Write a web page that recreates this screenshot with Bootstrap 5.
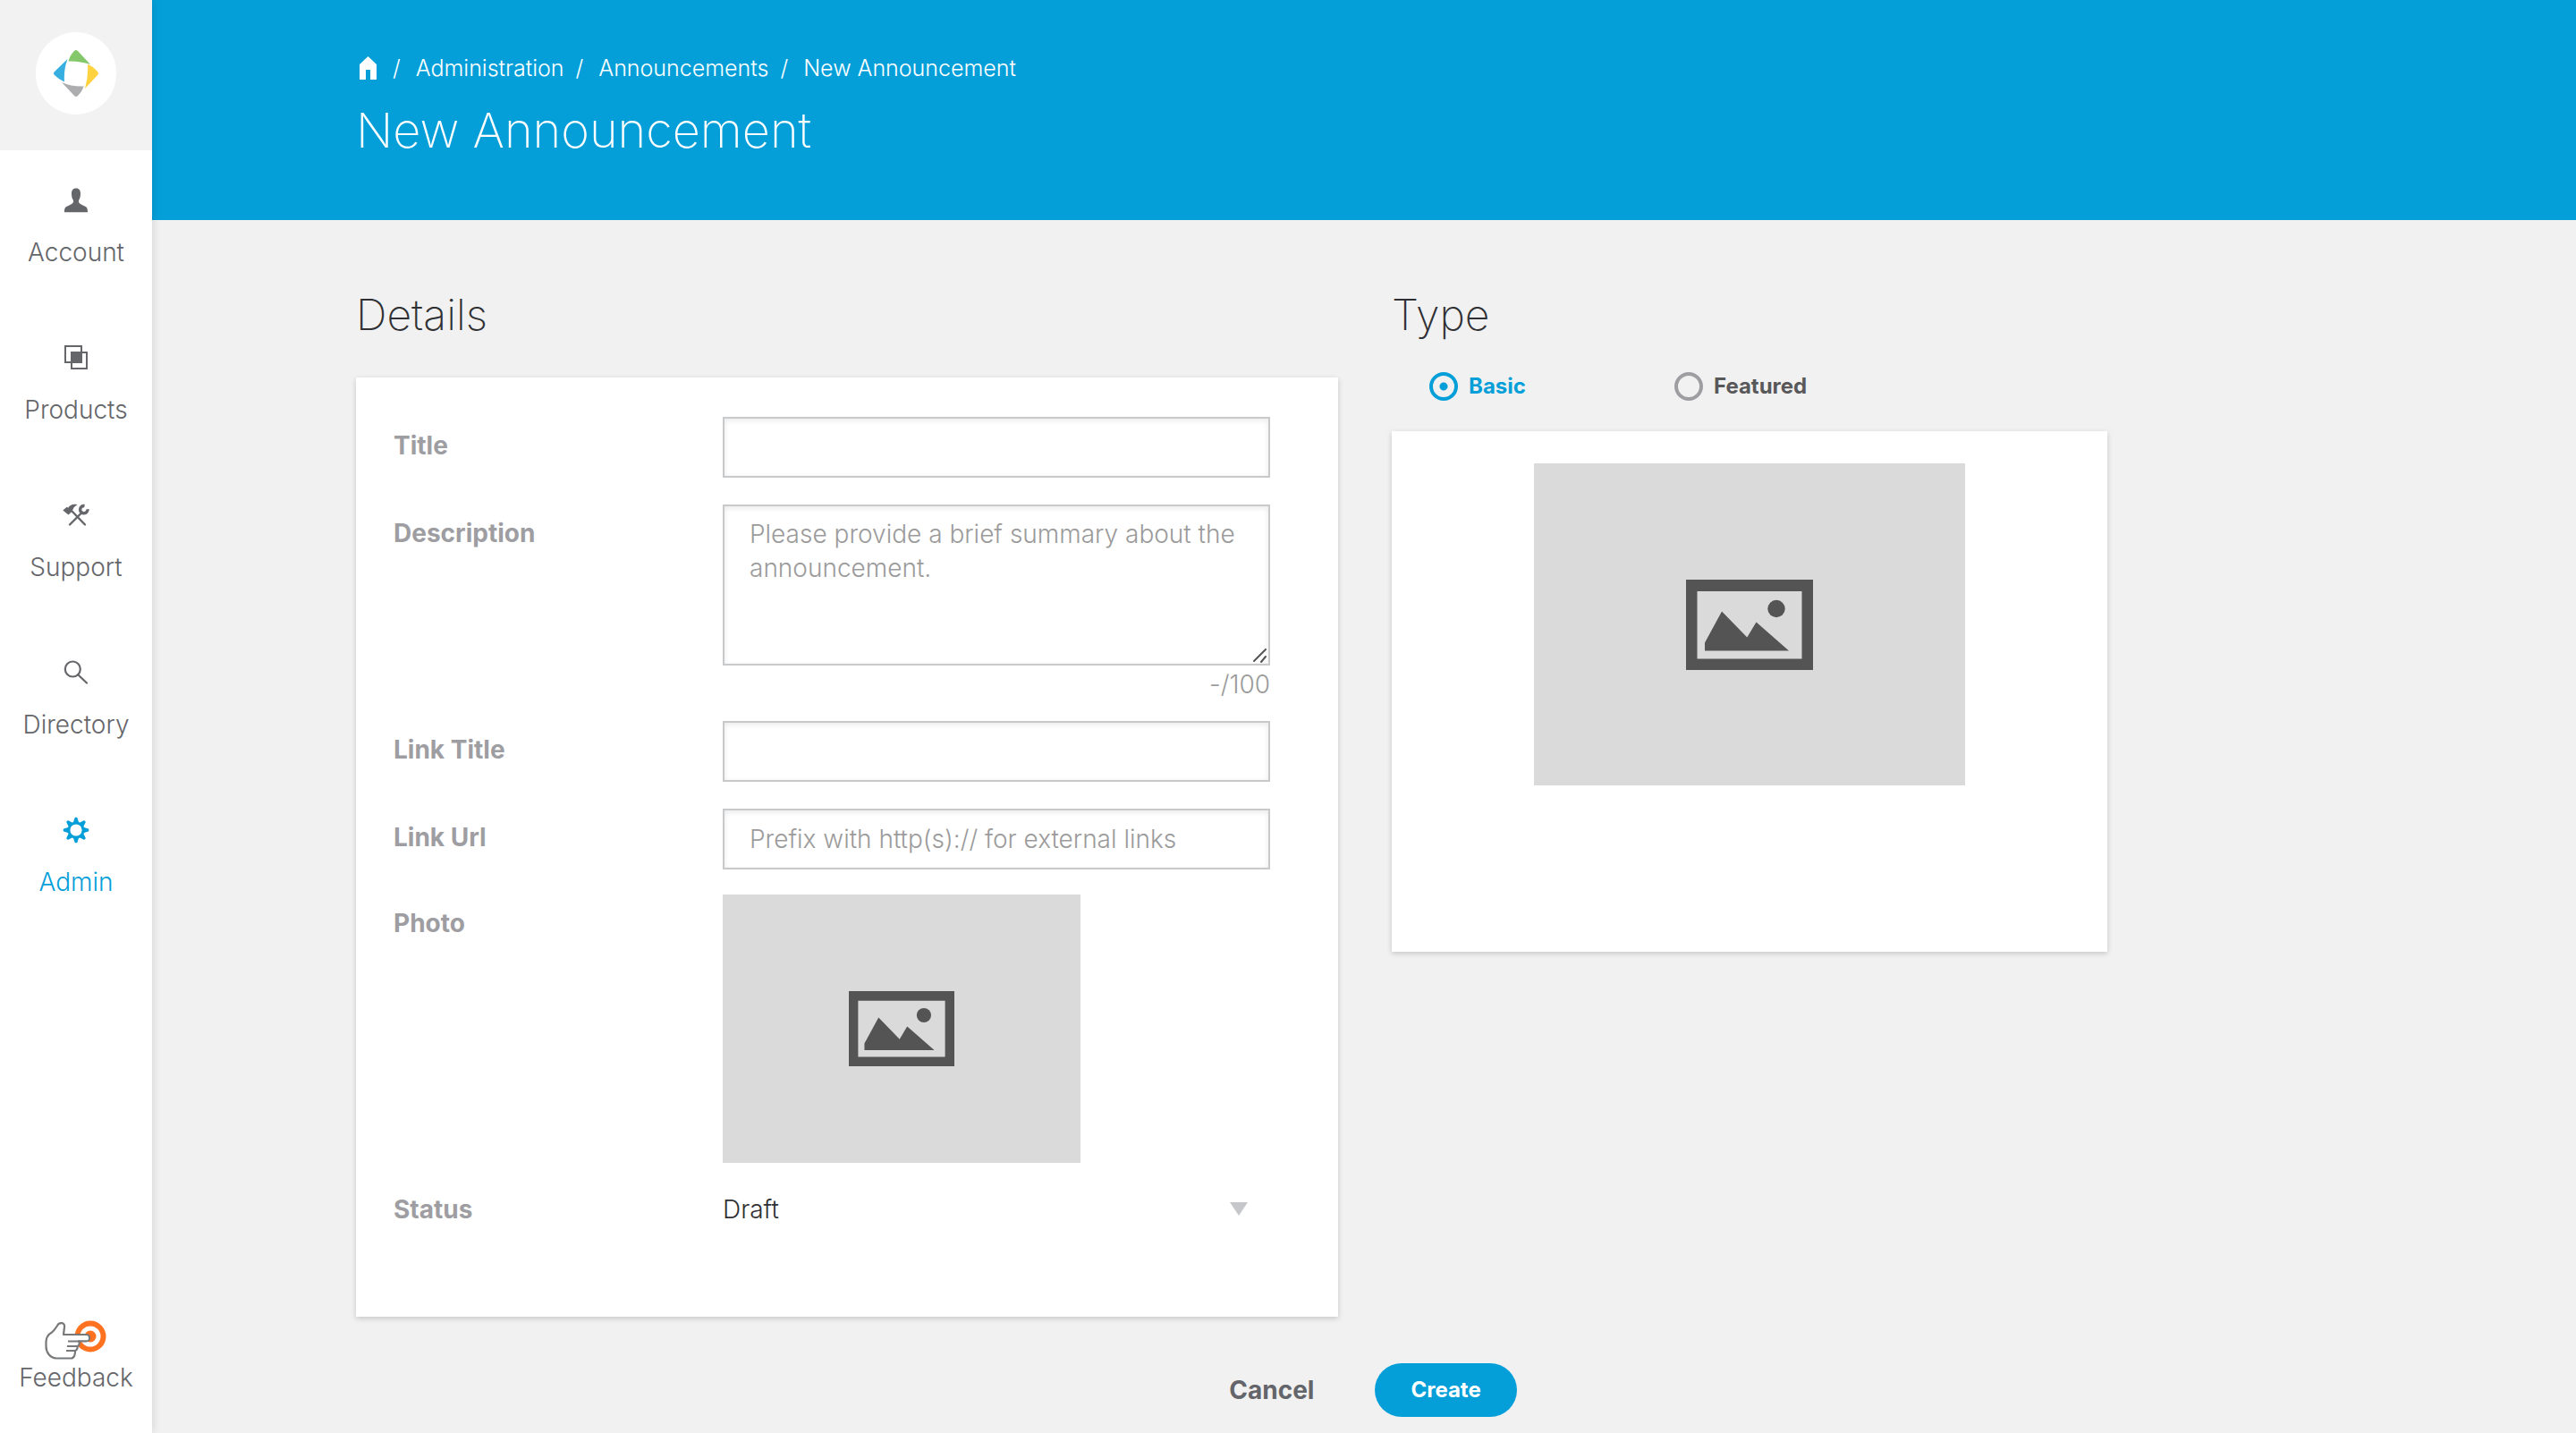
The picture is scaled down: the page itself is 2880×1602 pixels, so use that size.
<!DOCTYPE html>
<html lang="en">
<head>
<meta charset="utf-8">
<meta name="viewport" content="width=device-width, initial-scale=1">
<title>New Announcement</title>
<link href="https://cdn.jsdelivr.net/npm/bootstrap@5.3.0/dist/css/bootstrap.min.css" rel="stylesheet">
<style>
  body { font-family: Inter, "Liberation Sans", sans-serif; font-size: 28px; font-weight: 300; line-height: 40px; color: #2f3033; background: #f1f1f1; }
  .side-bar { width: 170px; z-index: 2; box-shadow: 0 0 10px rgba(0,0,0,.14); }
  .brand-area { height: 168px; background: #f2f2f2; }
  .brand-disc { width: 90px; height: 92px; border-radius: 45px; }
  .side-link { height: 176px; padding-top: 40px; gap: 22px; color: #65666a; }
  .side-link svg { width: 32px; height: 32px; }
  .side-link.active { color: #049fd9; }
  .feedback-link { color: #65666a; padding-bottom: 42px; }
  .page-head { background: #049fd9; padding: 57px 228px 68px; }
  .crumbs { --bs-breadcrumb-divider-color: #fff; --bs-breadcrumb-item-padding-x: 13px; font-size: 25px; line-height: 38px; margin-bottom: 19px; }
  .crumbs .breadcrumb-item + .breadcrumb-item::before { padding-right: 17px; }
  .page-title { font-size: 54px; line-height: 64px; font-weight: 200; }
  .page-body { padding: 76px 0 18px; }
  .form-cols { margin-left: 228px; max-width: 1958px; gap: 60px; }
  .details-col { flex: 1098 1 0; }
  .type-col { flex: 800 1 0; }
  .section-title { font-size: 48px; line-height: 60px; font-weight: 200; }
  .panel { background: #fff; box-shadow: 0 2px 6px rgba(0,0,0,.18); }
  .details-panel { margin-top: 40px; padding: 44px 76px 88px 42px; }
  .form-line { margin-bottom: 30px; }
  .form-line > label, .form-line > .line-label { width: 368px; flex: none; padding-top: 12px; font-weight: 700; color: #9e9ea2; }
  .field { border: 2px solid #c8c9ca; border-radius: 0; padding: 12px 28px; font-size: 28px; line-height: 40px; font-weight: 300; box-shadow: inset 0 2px 6px rgba(0,0,0,.09); }
  .field::placeholder { color: #9b9b9b; opacity: 1; }
  .field-box { height: 68px; }
  .field-area { height: 180px; resize: none; line-height: 38px; }
  .grip { right: 3px; bottom: 3px; width: 16px; height: 16px; }
  .counter { color: #9b9b9b; line-height: 38px; padding-top: 2px; margin-bottom: -2px; }
  .url-line { margin-bottom: 28px; }
  .photo-line { margin-bottom: 20px; }
  .photo-box { background: #dadada; color: #545454; }
  .photo-small { width: 400px; height: 300px; }
  .photo-large { width: 482px; height: 360px; }
  .status-select { border: 0; padding: 0; height: 64px; background: none; font-size: 28px; font-weight: 300; line-height: 40px; color: #2f3033; }
  .select-arrow { right: 25px; top: 24px; }
  .radio-row { margin: 34px 0; padding-left: 42px; }
  .radio-item { width: 274px; gap: 12px; font-size: 24px; line-height: 32px; font-weight: 700; color: #58585b; }
  .radio-item .form-check-input { width: 32px; height: 32px; margin: 0; border: 4px solid #9e9ea2; background: none; }
  .radio-item .form-check-input:checked { border-color: #049fd9; background: radial-gradient(circle, #049fd9 4px, transparent 5px); }
  .radio-item .form-check-input:checked + label { color: #049fd9; }
  .type-panel { padding: 36px 36px 186px; }
  .actions { margin-top: 52px; gap: 48px; }
  .cancel-btn { padding: 10px 20px; font-size: 28px; line-height: 40px; font-weight: 700; color: #64656a; border: 0; }
  .create-btn { padding: 10px 40px; font-size: 24px; line-height: 40px; font-weight: 700; color: #fff; background: #049fd9; border: 0; }
</style>
<script defer src="https://cdn.jsdelivr.net/npm/bootstrap@5.3.0/dist/js/bootstrap.bundle.min.js"></script>
</head>
<body>
<svg class="d-none">
  <symbol id="picture" viewBox="0 0 142 101">
    <path fill="currentColor" fill-rule="evenodd" d="M0 0h142v101H0zM12.5 13v75.500h117V13z"/>
    <path fill="currentColor" d="M21 70.500L40 35.500 68.300 64.500 78.500 47.500 115 79.500H21z"/>
    <circle fill="currentColor" cx="101" cy="32.500" r="9.700"/>
  </symbol>
</svg>
<div class="d-flex min-vh-100">
  <aside class="side-bar bg-white d-flex flex-column flex-shrink-0 position-relative">
    <div class="brand-area d-flex justify-content-center align-items-center pb-1">
      <a href="#" class="brand-disc bg-white d-flex justify-content-center align-items-center" aria-label="Home">
        <svg width="50" height="52" viewBox="0 0 50 52">
          <path fill="#84c86b" d="M23 1Q25-1 27 1L41 16Q29 12 16.500 12.500 18 6 23 1z"/>
          <path fill="#37aee0" d="M15.500 10Q11 22 12 35.500 6 33 1 28-1 26 1 24z"/>
          <path fill="#ffd23f" d="M38 16Q44 18 49 24 51 26 49 28L35 43Q39 30 38 16z"/>
          <path fill="#adadb0" d="M9 36Q20 41 33.500 40.500 32 46 27 51 25 53 23 51z"/>
        </svg>
      </a>
    </div>
    <nav class="nav flex-column flex-nowrap">
      <a href="#" class="side-link d-flex flex-column align-items-center text-decoration-none">
        <svg viewBox="0 0 32 32" fill="currentColor"><path d="M16 2.500c3.600 0 5.200 2.600 5 6.500-.1 3-.7 5-2 7v2c1 2 3 2.500 5.500 4C28 23.500 29 24 29 29.200H3C3 24 4 23.500 7.500 22c2.500-1.500 4.500-2 5.500-4v-2c-1.300-2-1.900-4-2-7-.2-3.900 1.400-6.500 5-6.500z"/></svg>
        <span>Account</span>
      </a>
      <a href="#" class="side-link d-flex flex-column align-items-center text-decoration-none">
        <svg viewBox="0 0 32 32" fill="none" stroke="currentColor" stroke-width="2"><path d="M4 3h18v18H4zM11 10h17v18H11z"/><path d="M11 10h11v11H11z" fill="currentColor"/></svg>
        <span>Products</span>
      </a>
      <a href="#" class="side-link d-flex flex-column align-items-center text-decoration-none">
        <svg viewBox="0 0 32 32"><g fill="none" stroke="currentColor" stroke-width="2.400" stroke-linecap="round"><path d="M9 26.500L22 13.500M26 26.500L11 11"/></g><path fill="none" stroke="currentColor" stroke-width="3.400" d="M25.500 5.500a4.200 4.200 0 1 0 3.500 3.700"/><path fill="currentColor" d="M1.300 10.500l4.500-3.800 1.500 1c1.500-2.700 5-4.800 10.200-3.400-2 1.200-4 2.400-4.700 4.700L11 12.300l-3.500 3.200z"/></svg>
        <span>Support</span>
      </a>
      <a href="#" class="side-link d-flex flex-column align-items-center text-decoration-none">
        <svg viewBox="0 0 32 32" fill="none" stroke="currentColor" stroke-width="2.200" stroke-linecap="round"><circle cx="12.300" cy="12" r="8.500"/><path d="M18.500 18.500l9.500 9"/></svg>
        <span>Directory</span>
      </a>
      <a href="#" class="side-link active d-flex flex-column align-items-center text-decoration-none">
        <svg viewBox="0 0 32 32"><circle cx="16" cy="16" r="8" fill="none" stroke="currentColor" stroke-width="2.800"/><g fill="currentColor" stroke="currentColor" stroke-width="1.500" stroke-linejoin="round"><path id="tooth" d="M15.300 2.500h1.400l1.800 5.500h-5z"/><use href="#tooth" transform="rotate(45 16 16)"/><use href="#tooth" transform="rotate(90 16 16)"/><use href="#tooth" transform="rotate(135 16 16)"/><use href="#tooth" transform="rotate(180 16 16)"/><use href="#tooth" transform="rotate(225 16 16)"/><use href="#tooth" transform="rotate(270 16 16)"/><use href="#tooth" transform="rotate(315 16 16)"/></g></svg>
        <span>Admin</span>
      </a>
    </nav>
    <a href="#" class="feedback-link mt-auto d-flex flex-column align-items-center text-decoration-none">
      <svg width="70" height="44" viewBox="0 0 70 44">
        <circle cx="51" cy="18" r="14.500" fill="#fff" stroke="#ff7320" stroke-width="6"/><circle cx="51" cy="18" r="6.500" fill="#ff7320"/>
        <path fill="#fff" stroke="#77787a" stroke-width="2.200" stroke-linejoin="round" d="M21 16H46.500a3.700 3.700 0 0 1 0 7.400H38c1.500 2 .5 5-1.500 5.500.5 2-.5 4.500-2.500 5 .2 4-1 8.600-4.500 8.600H13C6 42 1.500 36 1.500 29V24c0-5 3-8.500 6.500-10.500C11 11 12 9 14 6c2-4 9-4 8 1.500z"/>
        <path fill="none" stroke="#77787a" stroke-width="2" d="M26 23.400h13M25 29h12.500M24 34h11"/>
      </svg>
      <span>Feedback</span>
    </a>
  </aside>

  <div class="flex-grow-1">
    <header class="page-head text-white">
      <nav aria-label="breadcrumb">
        <ol class="breadcrumb crumbs">
          <li class="breadcrumb-item d-flex align-items-center"><a href="#" class="text-white d-flex" aria-label="Home"><svg width="28" height="26" viewBox="0 0 28 26" fill="currentColor"><path d="M13.500 0l9.500 9v17h-7V15h-5v11H4V9z"/></svg></a></li>
          <li class="breadcrumb-item"><a href="#" class="text-white text-decoration-none">Administration</a></li>
          <li class="breadcrumb-item"><a href="#" class="text-white text-decoration-none">Announcements</a></li>
          <li class="breadcrumb-item text-white" aria-current="page">New Announcement</li>
        </ol>
      </nav>
      <h1 class="page-title mb-0">New Announcement</h1>
    </header>

    <main>
      <form class="page-body">
        <div class="form-cols d-flex align-items-start">
          <section class="details-col">
            <h2 class="section-title mb-0">Details</h2>
            <div class="panel details-panel">
              <div class="form-line d-flex">
                <label for="title">Title</label>
                <input type="text" id="title" class="form-control field field-box">
              </div>
              <div class="form-line d-flex mb-4">
                <label for="description">Description</label>
                <div class="flex-grow-1">
                  <div class="position-relative">
                    <textarea id="description" class="form-control field field-area" placeholder="Please provide a brief summary about the announcement."></textarea>
                    <svg class="grip position-absolute" viewBox="0 0 16 16" stroke="#555" stroke-width="2" stroke-linecap="round"><path d="M1 14L14 1M9 15l5-6"/></svg>
                  </div>
                  <div class="counter text-end">-/100</div>
                </div>
              </div>
              <div class="form-line d-flex">
                <label for="link-title">Link Title</label>
                <input type="text" id="link-title" class="form-control field field-box">
              </div>
              <div class="form-line url-line d-flex">
                <label for="link-url">Link Url</label>
                <input type="text" id="link-url" class="form-control field field-box" placeholder="Prefix with http(s):// for external links">
              </div>
              <div class="form-line photo-line d-flex">
                <span class="line-label">Photo</span>
                <button type="button" class="photo-box photo-small border-0 p-0 d-flex align-items-center justify-content-center" aria-label="Choose photo"><svg width="118" height="84"><use href="#picture"/></svg></button>
              </div>
              <div class="form-line d-flex mb-0">
                <label for="status">Status</label>
                <div class="flex-grow-1 position-relative">
                  <select id="status" class="form-select status-select"><option>Draft</option></select>
                  <svg class="select-arrow position-absolute pe-none" width="20" height="15" viewBox="0 0 20 15"><path fill="#c6c7ca" d="M0 0h20L10 15z"/></svg>
                </div>
              </div>
            </div>
          </section>

          <section class="type-col">
            <h2 class="section-title mb-0">Type</h2>
            <div class="radio-row d-flex">
              <div class="radio-item d-flex"><input class="form-check-input" type="radio" name="kind" id="basic" checked><label for="basic">Basic</label></div>
              <div class="radio-item d-flex"><input class="form-check-input" type="radio" name="kind" id="featured"><label for="featured">Featured</label></div>
            </div>
            <div class="panel type-panel d-flex justify-content-center">
              <div class="photo-box photo-large d-flex align-items-center justify-content-center"><svg width="142" height="101"><use href="#picture"/></svg></div>
            </div>
          </section>
        </div>
        <div class="actions d-flex justify-content-center align-items-center">
          <button type="button" class="btn cancel-btn">Cancel</button>
          <button type="submit" class="btn create-btn rounded-pill">Create</button>
        </div>
      </form>
    </main>
  </div>
</div>
</body>
</html>
